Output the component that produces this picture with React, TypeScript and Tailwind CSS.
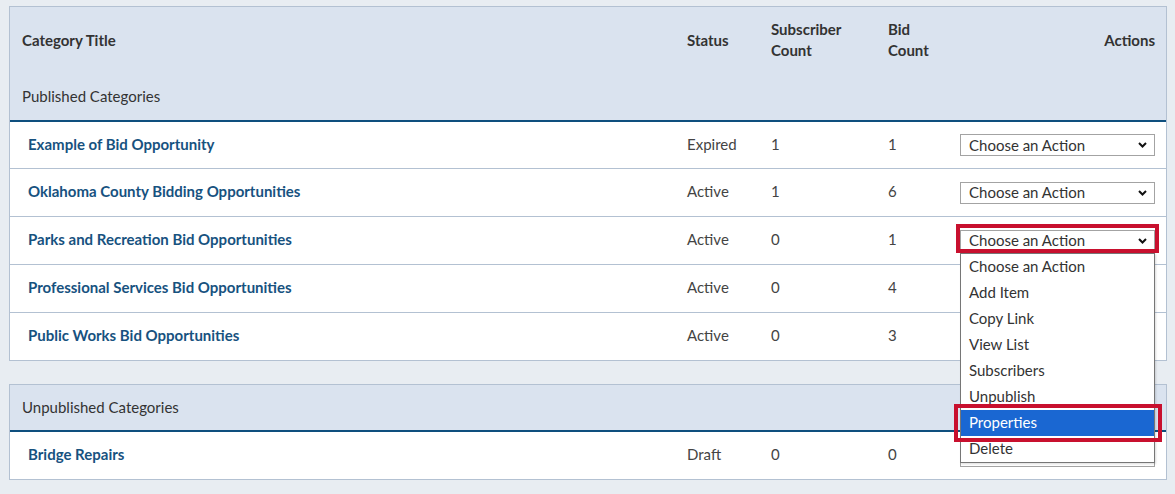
const FONT = "font-['Lato','Open_Sans',sans-serif]"

type Row = { title: string; status: string; subs: number; bids: number }

const published: Row[] = [
  { title: 'Example of Bid Opportunity', status: 'Expired', subs: 1, bids: 1 },
  { title: 'Oklahoma County Bidding Opportunities', status: 'Active', subs: 1, bids: 6 },
  { title: 'Parks and Recreation Bid Opportunities', status: 'Active', subs: 0, bids: 1 },
  { title: 'Professional Services Bid Opportunities', status: 'Active', subs: 0, bids: 4 },
  { title: 'Public Works Bid Opportunities', status: 'Active', subs: 0, bids: 3 },
]

const unpublished: Row[] = [{ title: 'Bridge Repairs', status: 'Draft', subs: 0, bids: 0 }]

const actions = [
  'Choose an Action',
  'Add Item',
  'Copy Link',
  'View List',
  'Subscribers',
  'Unpublish',
  'Properties',
  'Delete',
]

const cols = 'grid grid-cols-[1fr_84px_117px_72px_195px] pr-[11px]'

function Chevron() {
  return (
    <svg width="9" height="6" viewBox="0 0 9 6" className="shrink-0">
      <path d="M1 1 L4.5 4.5 L8 1" fill="none" stroke="#111" strokeWidth="2" />
    </svg>
  )
}

function ActionSelect({ open }: { open?: boolean }) {
  return (
    <div className="relative">
      <div className="flex h-[22px] w-[195px] items-center justify-between border border-[#a3a3a3] bg-white pl-2 pr-[7px] text-[15px] leading-none text-[#333]">
        <span>Choose an Action</span>
        <Chevron />
      </div>
      {open && (
        <>
          <div className="pointer-events-none absolute -left-[4px] -top-[6px] h-[29px] w-[203px] border-[4px] border-[#c8102e]" />
          <div className="absolute left-0 top-[23px] z-10 w-[195px] border border-[#767676] bg-white text-[15px] text-[#333] shadow-[1px_1px_2px_rgba(0,0,0,0.15)]">
            {actions.map((a) => (
              <div
                key={a}
                className={`flex h-[26px] items-center pb-px pl-2 ${a === 'Properties' ? 'bg-[#1a67d2] text-white' : ''}`}
              >
                {a}
              </div>
            ))}
          </div>
          <div className="pointer-events-none absolute -left-[6px] top-[174px] z-20 h-[38px] w-[208px] border-[4px] border-[#c8102e]" />
        </>
      )}
    </div>
  )
}

function DataRow({ row, border, short, open }: { row: Row; border?: boolean; short?: boolean; open?: boolean }) {
  return (
    <div
      className={`${cols} ${short ? 'h-[47px]' : 'h-[48px]'} items-center bg-white text-[15px] text-[#444] ${border ? 'border-b border-[#b3c1d2]' : ''}`}
    >
      <a className="-mt-[2px] pl-[18px] font-bold text-[#17527f]">{row.title}</a>
      <span className="-mt-[2px]">{row.status}</span>
      <span className="-mt-[2px]">{row.subs}</span>
      <span className="-mt-[2px]">{row.bids}</span>
      <ActionSelect open={open} />
    </div>
  )
}

export default function App() {
  return (
    <div className={`${FONT} min-h-[494px] bg-[#e8edf2] pl-[9px] pr-[8px] pt-[6px]`}>
      <div className="border border-[#b3c1d2]">
        <div className="bg-[#dae3ef] text-[15px] text-[#333]">
          <div className={`${cols} h-[66px] items-center font-bold leading-[21px]`}>
            <span className="pl-[12px]">Category Title</span>
            <span>Status</span>
            <span>
              Subscriber
              <br />
              Count
            </span>
            <span>
              Bid
              <br />
              Count
            </span>
            <span className="text-right">Actions</span>
          </div>
          <div className="flex h-[47px] items-center pb-px pl-[12px]">Published Categories</div>
        </div>
        <div className="h-[2px] bg-[#0e4f7e]" />
        {published.map((r, i) => (
          <DataRow
            key={r.title}
            row={r}
            border={i < published.length - 1}
            short={i === 0 || i === published.length - 1}
            open={i === 2}
          />
        ))}
      </div>

      <div className="mt-[23px] border border-[#b3c1d2]">
        <div className="flex h-[45px] items-center bg-[#dae3ef] pb-px pl-[12px] text-[15px] text-[#333]">
          Unpublished Categories
        </div>
        <div className="h-[2px] bg-[#0e4f7e]" />
        {unpublished.map((r) => (
          <DataRow key={r.title} row={r} short />
        ))}
      </div>
    </div>
  )
}
